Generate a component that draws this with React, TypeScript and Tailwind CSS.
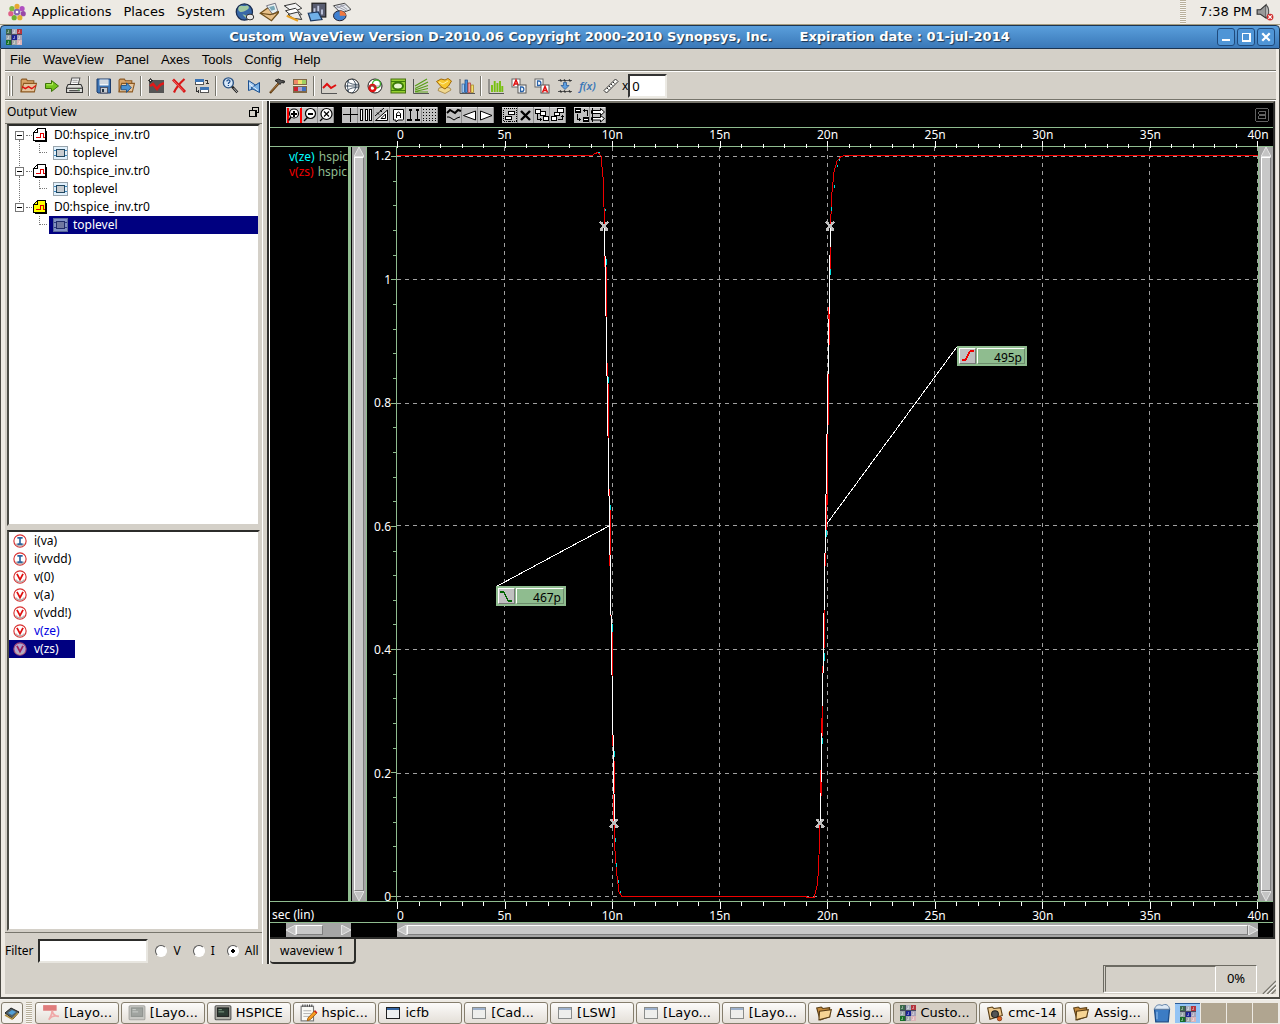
import React from "react";

type Kids = { children?: React.ReactNode };

/* ---------- icon helpers ---------- */

function Ico({ children, size = 16, crisp = false }: Kids & { size?: number; crisp?: boolean }) {
  return (
    <svg
      width={size}
      height={size}
      viewBox="0 0 16 16"
      fill="none"
      shapeRendering={crisp ? "crispEdges" : "auto"}
      className="shrink-0"
      aria-hidden="true"
    >
      {children}
    </svg>
  );
}

function AppIcon({ size = 16 }: { size?: number }) {
  const cells = ["#3c6a4c", "#a8aebc", "#b4343c", "#98a4a8", "#1c2494", "#a8a4b8", "#187028", "#a0a8a8", "#dcb4b8"];
  return (
    <Ico size={size} crisp>
      <rect width="16" height="16" fill="#484c60" />
      {cells.map((c, i) => (
        <g key={i} transform={`translate(${(i % 3) * 5 + (i % 3 > 0 ? 1 : 0)} ${Math.floor(i / 3) * 5 + (i > 2 ? 1 : 0)})`}>
          <rect width="5" height="5" fill={c} />
          <path d="M1 3.500h2M2.500 1v2" stroke="#ffffff" strokeOpacity=".4" />
        </g>
      ))}
    </Ico>
  );
}

const Folder = () => (
  <Ico size={18}>
    <path d="M1.500 3.500l4-.8 1.500 1.300 6-.8v8l-8.500 3z" fill="#c48a3c" stroke="#5c4018" />
    <path d="M4 6.500l10.500-1.500-1.500 6.500-9.500 2.500z" fill="#f6d494" stroke="#5c4018" />
  </Ico>
);

const WindowIcon = ({ dim = false }: { dim?: boolean }) => (
  <Ico crisp size={16}>
    <rect x="1.500" y="2.500" width="13" height="11" fill={dim ? "#eeeeec" : "#eef0f0"} stroke={dim ? "#8a8c8a" : "#202020"} />
    <rect x="2" y="3" width="12" height="2" fill={dim ? "#9cb0cc" : "#3465a4"} />
  </Ico>
);

const Terminal = ({ dim = false }: { dim?: boolean }) => (
  <Ico size={18}>
    <rect x="1" y="1.500" width="14" height="12.500" rx="1" fill={dim ? "#c8c8c4" : "#b0b0a8"} stroke={dim ? "#a8a8a4" : "#555"} />
    <rect x="3" y="3.500" width="10" height="7.500" fill={dim ? "#a0a4a0" : "#2c3c34"} stroke={dim ? "#909490" : "#222"} />
    <path d="M4 5h3M4 7h5" stroke={dim ? "#d0d4d0" : "#8aa890"} strokeWidth=".8" />
  </Ico>
);

const FolderOpen = ({ arrow = false }: { arrow?: boolean }) => (
  <Ico size={17}>
    <path d="M1 14V3l1-1h4l1 1.500h6V6" fill="#d8a468" stroke="#8c5820" />
    <path d="M1 14L3.500 6H15.500L13.500 14z" fill="#e4c49c" stroke="#8c5820" />
    {arrow ? (
      <path d="M3 8h5V5.500L12.500 10 8 14.500V12H3z" fill="#4a90d0" stroke="#1c4c80" strokeWidth=".8" />
    ) : (
      <path d="M2 9l3 2 3-2 3 2 4-3" stroke="#e01010" strokeWidth="1.300" />
    )}
  </Ico>
);

const toolbarGroups: { name: string; icon: React.ReactNode }[][] = [
  [
    { name: "Open waveform", icon: <FolderOpen /> },
    {
      name: "Reload",
      icon: (
        <Ico>
          <path d="M1.500 5.500h6V2.500l7 5.500-7 5.500v-3h-6z" fill="#74c41c" stroke="#3c7408" />
          <path d="M2.500 6.800h6V4.500" stroke="#b8f060" />
        </Ico>
      ),
    },
    {
      name: "Print",
      icon: (
        <Ico size={17}>
          <path d="M4 7l1.500-6H13l-1.500 6" fill="#fff" stroke="#555" />
          <path d="M6 3h5M6 5h5" stroke="#999" />
          <path d="M2 7h12l1.500 3v4.500h-15V10z" fill="#e0e0dc" stroke="#333" />
          <path d="M1 10.500h14M3 13h10" stroke="#222" />
          <rect x="11" y="11.500" width="2" height="1" fill="#6c6" />
        </Ico>
      ),
    },
  ],
  [
    {
      name: "Save",
      icon: (
        <Ico>
          <path d="M1 1h13.500v14H2L1 14z" fill="#3c74b4" stroke="#1c3c6c" />
          <rect x="3.500" y="1.500" width="9" height="6" fill="#f0f4f8" />
          <path d="M4 3h8M4 5h8" stroke="#b0b8c4" />
          <rect x="4.500" y="9.500" width="7" height="5.500" fill="#c8ccd0" stroke="#445" strokeWidth=".8" />
          <rect x="6" y="11" width="2" height="3" fill="#234" />
        </Ico>
      ),
    },
    { name: "Restore session", icon: <FolderOpen arrow /> },
  ],
  [
    {
      name: "New waveview",
      icon: (
        <Ico>
          <rect x="1" y="2" width="15" height="13" fill="#555" />
          <path d="M2 8l3-2 4 5 3-4 4-2" stroke="#e01818" strokeWidth="2.500" />
          <path d="M2.500 0v5M0 2.500h5M1 1l3 3M4 1L1 4" stroke="#222" strokeWidth=".8" />
          <rect x="2" y="2" width="1" height="1" fill="#fff" />
        </Ico>
      ),
    },
    {
      name: "Delete",
      icon: (
        <Ico>
          <path d="M2 1.500c3 3 8 8 12 12.500" stroke="#d81818" strokeWidth="2.800" />
          <path d="M13.500 1C9 5 5 10 3 14.500" stroke="#d81818" strokeWidth="2.200" />
          <path d="M2.500 2.500l10 10.500" stroke="#ff8080" strokeWidth=".7" />
        </Ico>
      ),
    },
    {
      name: "Swap",
      icon: (
        <Ico crisp>
          <rect x="1.500" y="1.500" width="8" height="5" fill="#fff" stroke="#555" />
          <rect x="1" y="1" width="9" height="3" fill="#3c74b4" />
          <rect x="6.500" y="10.500" width="8" height="4" fill="#fff" stroke="#555" />
          <rect x="6" y="9" width="9" height="3" fill="#3c74b4" />
          <path d="M11 2.500h2.500V6M12 5.500h3M2.500 9v4.500H5M4.500 12v3" stroke="#333" />
        </Ico>
      ),
    },
  ],
  [
    {
      name: "Find",
      icon: (
        <Ico size={17}>
          <circle cx="6" cy="5.500" r="4.700" fill="#d8e8f8" stroke="#2c5484" strokeWidth="1.300" />
          <path d="M4.500 4.200c.3-2 3.200-1.800 3 0C7.400 5.300 6 5.300 6 6.500M6 7.500v1" stroke="#1c4c8c" strokeWidth="1.200" />
          <path d="M9.500 9l5 5.500" stroke="#222" strokeWidth="2.400" />
          <path d="M11 10.500l3.500 4" stroke="#ddd" strokeWidth=".8" />
        </Ico>
      ),
    },
    {
      name: "Convert",
      icon: (
        <Ico>
          <path d="M2.500 2.500l10 6.500-10 3.500z" fill="#a8ccf0" stroke="#1c5090" />
          <path d="M13.500 4.500v10L5 10z" fill="#78b0e4" stroke="#1c5090" />
          <path d="M3 5.500l9 7" stroke="#fff" strokeWidth=".8" />
        </Ico>
      ),
    },
    {
      name: "Tools",
      icon: (
        <Ico>
          <path d="M1 15L10 5" stroke="#5c3810" strokeWidth="2.200" />
          <path d="M1.500 14L10 5" stroke="#c89050" strokeWidth=".8" />
          <path d="M6 2.500L9.500 1l3 1.500 3 .5-.5 2-2.500-.5-1.500 2-2-2z" fill="#555" stroke="#222" />
        </Ico>
      ),
    },
    {
      name: "Palette",
      icon: (
        <Ico crisp>
          <rect x="1" y="1" width="14" height="14" fill="#806848" />
          <rect x="2" y="2" width="4" height="4" fill="#f08868" />
          <rect x="6" y="2" width="4" height="4" fill="#f0e070" />
          <rect x="10" y="2" width="4" height="4" fill="#a0d060" />
          <rect x="2" y="9" width="4" height="4" fill="#d02030" />
          <rect x="6" y="9" width="4" height="4" fill="#a8a0d0" />
          <rect x="10" y="9" width="4" height="4" fill="#4070c0" />
          <rect x="1" y="7" width="14" height="1" fill="#f0e8d0" />
        </Ico>
      ),
    },
  ],
  [
    {
      name: "Waveform",
      icon: (
        <Ico>
          <path d="M.5 1v14.500H16" stroke="#555" />
          <path d="M2 10l4-4 4 4 5-3" stroke="#e01010" strokeWidth="2" />
        </Ico>
      ),
    },
    {
      name: "Smith chart",
      icon: (
        <Ico>
          <circle cx="8" cy="8" r="7" fill="#fff" stroke="#222" />
          <path d="M1 8h14M8 1c5 3 5 11 0 14M3 3c3 3 7 4 12 3M3 13c3-3 7-4 12-3M5 1.500c-2 4-2 9 0 13" stroke="#345" strokeWidth=".9" />
        </Ico>
      ),
    },
    {
      name: "Polar chart",
      icon: (
        <Ico>
          <circle cx="8" cy="8" r="7" fill="#fff" stroke="#222" />
          <circle cx="9.500" cy="6" r="4" stroke="#40b030" strokeWidth="1.400" />
          <circle cx="5.500" cy="10" r="3" stroke="#e01010" strokeWidth="2.400" />
          <path d="M1 8h14" stroke="#666" strokeWidth=".6" />
        </Ico>
      ),
    },
    {
      name: "Eye diagram",
      icon: (
        <Ico>
          <rect x="1" y="1" width="14.500" height="14" fill="#94d030" stroke="#487010" />
          <ellipse cx="8" cy="8" rx="5" ry="3.500" fill="#e8f4d0" stroke="#3c7c08" strokeWidth="2" />
          <path d="M1 3.500h14M1 12.500h14" stroke="#3c7c08" />
        </Ico>
      ),
    },
    {
      name: "Sweep",
      icon: (
        <Ico>
          <path d="M.5 1v14.500H16" stroke="#555" />
          <path d="M2 8L14 1M2 10.500L15 4M2 12L15 7.500M2 13.500L15 10.500M2 14h13" stroke="#58a018" strokeWidth="1.200" />
        </Ico>
      ),
    },
    {
      name: "Surface",
      icon: (
        <Ico>
          <path d="M3 10l5-1 6 1 1 2-6 3.500L2 12.500z" fill="#f0d890" stroke="#a08040" strokeWidth=".8" />
          <path d="M.5 3.500L5 1l4 1 3-1.500 3.500 2.500-3 5L9 11 5.500 9z" fill="#f8c830" stroke="#a06808" />
          <path d="M3 4l4 2 5-3" stroke="#fff0a0" />
        </Ico>
      ),
    },
    {
      name: "Bar chart",
      icon: (
        <Ico>
          <path d="M1 1v14.500H16" stroke="#555" />
          <rect x="3" y="6" width="2.500" height="8.500" fill="#a0c8f0" stroke="#2c5c98" strokeWidth=".7" />
          <rect x="6" y="2" width="2.500" height="12.500" fill="#4890e0" stroke="#1c4880" strokeWidth=".7" />
          <rect x="9" y="5" width="2.500" height="9.500" fill="#f0a0a0" stroke="#b03030" strokeWidth=".7" />
          <rect x="12" y="7" width="2.500" height="7.500" fill="#f4e070" stroke="#a08020" strokeWidth=".7" />
        </Ico>
      ),
    },
  ],
  [
    {
      name: "Histogram",
      icon: (
        <Ico>
          <path d="M1 1v14.500H16" stroke="#555" />
          <path d="M4 14V7M6.700 14V3M9.400 14V5M12 14V3M14.300 14V8" stroke="#78c010" strokeWidth="1.900" />
        </Ico>
      ),
    },
    {
      name: "Analog to digital",
      icon: (
        <Ico>
          <rect x="1" y="1" width="8" height="8" fill="#fff" stroke="#666" />
          <path d="M2.500 8L5 2l2.500 6M3.500 6h3" stroke="#e01010" strokeWidth="1.500" />
          <rect x="7" y="7" width="8" height="8" fill="#fff" stroke="#555" />
          <path d="M9.500 9v4.500h1.500c2.500 0 2.500-4.500 0-4.500z" stroke="#2c64a8" strokeWidth="1.300" />
        </Ico>
      ),
    },
    {
      name: "Digital to analog",
      icon: (
        <Ico>
          <rect x="1" y="1" width="8" height="8" fill="#fff" stroke="#666" />
          <path d="M3.500 3v4.500H5c2.500 0 2.500-4.500 0-4.500z" stroke="#2c64a8" strokeWidth="1.300" />
          <rect x="7" y="7" width="8" height="8" fill="#fff" stroke="#555" />
          <path d="M8.500 14.500L11 8.500l2.500 6M9.500 12.500h3" stroke="#e01010" strokeWidth="1.500" />
        </Ico>
      ),
    },
    {
      name: "Collapse",
      icon: (
        <Ico>
          <path d="M1 2.500h14M1 13.500h14" stroke="#555" />
          <path d="M3 1.500l1.500 2M7 1.500l1.500 2M12 1.500l1.500 2M3 12.500l1.500 2M7 12.500l1.500 2M12 12.500l1.500 2" stroke="#333" strokeWidth="1.400" />
          <path d="M6.500 4.500h3v3H12L8 11.500 4 7.500h2.500z" fill="#60a0e0" stroke="#2c5c98" strokeWidth=".8" />
        </Ico>
      ),
    },
    {
      name: "Function",
      icon: <span className="font-['Noto_Sans',sans-serif] text-[11px] leading-4 font-semibold text-[#3c78b8] italic">f(x)</span>,
    },
    {
      name: "Ruler",
      icon: (
        <Ico>
          <path d="M1 12.500L12.500 1 15 3.500 3.500 15z" fill="#f8f8f4" stroke="#333" />
          <path d="M4 10l1.500 1.500M6 8l1.500 1.500M8 6l1.500 1.500M10 4l1.500 1.500" stroke="#222" />
        </Ico>
      ),
    },
  ],
];

/* ---------- black-and-grey waveview toolbar ---------- */

const viewGroups: { name: string; icon: React.ReactNode }[][] = [
  [
    {
      name: "Zoom in",
      icon: (
        <>
          <path d="M1.500 1v15M14.500 1v15" stroke="#f00" strokeWidth="2" shapeRendering="crispEdges" />
          <circle cx="8" cy="6.500" r="4.500" fill="#fff" stroke="#000" strokeWidth="1.200" />
          <path d="M5 6.500h6M8 3.500v6" stroke="#000" strokeWidth="2" shapeRendering="crispEdges" />
          <path d="M5 10L2.500 13.500" stroke="#000" strokeWidth="1.500" />
        </>
      ),
    },
    {
      name: "Zoom out",
      icon: (
        <>
          <circle cx="8.500" cy="6.500" r="5" fill="#fff" stroke="#000" strokeWidth="1.200" />
          <path d="M6 7h5" stroke="#000" strokeWidth="2" shapeRendering="crispEdges" />
          <path d="M5.500 10.500L2 14" stroke="#000" strokeWidth="1.500" />
        </>
      ),
    },
    {
      name: "Zoom fit",
      icon: (
        <>
          <circle cx="8.500" cy="7" r="5.500" fill="#fff" stroke="#000" strokeWidth="1.200" />
          <path d="M6 4.500l5 5M11 4.500l-5 5M4.500 11.500L2 14" stroke="#000" strokeWidth="1.200" />
        </>
      ),
    },
  ],
  [
    { name: "Cursor", icon: <path d="M8.500 1v14M1 7.500h15" stroke="#000" shapeRendering="crispEdges" /> },
    {
      name: "Grid columns",
      icon: (
        <g stroke="#000" fill="#fff" shapeRendering="crispEdges">
          <path d="M2.500 2.500h2v11h-2zM7.500 2.500h2v11h-2zM11.500 2.500h2v11h-2z" />
        </g>
      ),
    },
    {
      name: "Measure",
      icon: (
        <>
          <path d="M1.500 13.500h12V3z" fill="#fff" stroke="#000" />
          <path d="M7 11.500h4.500V7zM1 9l9-8M3 5.500l2 2M6 3l2 2" stroke="#000" />
        </>
      ),
    },
    {
      name: "Annotate",
      icon: (
        <>
          <path d="M3.500 2.500h10v10l-1 .5H8l-2 2v-2H3.500z" fill="#fff" stroke="#000" />
          <path d="M6.500 11V6.500L8.500 5l2 1.500V11M6.500 8.500h4" stroke="#000" />
        </>
      ),
    },
    {
      name: "Markers",
      icon: (
        <g shapeRendering="crispEdges">
          <path d="M4 2v12M11 2v12" stroke="#000" />
          <path d="M3 3h3M10 3h3M1 13h5M9 13h5" stroke="#000" strokeWidth="2" />
        </g>
      ),
    },
    {
      name: "Grid",
      icon: (
        <path
          d="M1 2.500h14M1 5.500h14M1 8.500h14M1 11.500h14M1 13.500h14"
          stroke="#000"
          strokeDasharray="1 2"
          shapeRendering="crispEdges"
        />
      ),
    },
  ],
  [
    {
      name: "Signals",
      icon: (
        <>
          <path d="M1 6l3-3 5 3 3-3 3 1" stroke="#000" strokeWidth="2" />
          <path d="M1 10h2l2 1 3 2 3-2 3-1" stroke="#000" />
        </>
      ),
    },
    { name: "Previous", icon: <path d="M1.500 8.500L13.500 4v9z" fill="#fff" stroke="#000" /> },
    { name: "Next", icon: <path d="M14 8.500L2.500 4v9z" fill="#fff" stroke="#000" /> },
  ],
  [
    {
      name: "Select group",
      icon: (
        <g shapeRendering="crispEdges">
          <rect x="1.500" y="1.500" width="13" height="13" stroke="#000" strokeDasharray="1 1" />
          <path d="M6.500 4.500h6v3h-6zM3.500 9.500h6v3h-6z" fill="#fff" stroke="#000" />
        </g>
      ),
    },
    { name: "Delete panel", icon: <path d="M3 4l9 9M12 4l-9 9" stroke="#000" strokeWidth="2.400" /> },
    {
      name: "Send back",
      icon: (
        <g shapeRendering="crispEdges">
          <path d="M1.500 2.500h5v4h-5zM6.500 4.500h5v4h-5zM9.500 9.500h5v4h-5z" fill="#fff" stroke="#000" />
          <path d="M3.500 7v5.500H8M6.500 11v3" stroke="#000" />
        </g>
      ),
    },
    {
      name: "Bring front",
      icon: (
        <g shapeRendering="crispEdges">
          <path d="M7.500 1.500h6v4h-6zM4.500 5.500h5v3h-5zM1.500 9.500h5v4h-5z" fill="#fff" stroke="#000" />
          <path d="M8 12.500h4.500V8M11 9.500h3" stroke="#000" />
        </g>
      ),
    },
  ],
  [
    {
      name: "Exchange panels",
      icon: (
        <g shapeRendering="crispEdges">
          <path d="M1.500 1.500h5v4h-5zM9.500 10.500h5v4h-5z" fill="#000" stroke="#000" />
          <path d="M2 3.500h4M10 12.500h4" stroke="#fff" />
          <path d="M9 3.500h4.500V9M10.500 2v3M3.500 7v5.500H7M5.500 11v3" stroke="#000" />
        </g>
      ),
    },
    {
      name: "Link panels",
      icon: (
        <>
          <path d="M1.500 3.500h9V1.500L14.500 5l-4 3.500v-2h-9zM1.500 10.500h9v-2l4 3-4 3.500v-2h-9z" fill="#fff" stroke="#000" />
          <path d="M2.500 1v14" stroke="#000" />
        </>
      ),
    },
  ],
];

/* ---------- data ---------- */

const files = [{ active: false }, { active: false }, { active: true }];

const signals = [
  { name: "i(va)", kind: "I" },
  { name: "i(vvdd)", kind: "I" },
  { name: "v(0)", kind: "V" },
  { name: "v(a)", kind: "V" },
  { name: "v(vdd!)", kind: "V" },
  { name: "v(ze)", kind: "V", plotted: true },
  { name: "v(zs)", kind: "V", selected: true },
];

const timeLabels = ["0", "5n", "10n", "15n", "20n", "25n", "30n", "35n", "40n"];
const voltLabels = ["1.2", "1", "0.8", "0.6", "0.4", "0.2", "0"];

const PLOT_W = 861;
const PLOT_H = 755;
const timeX = (n: number) => n * 21.5;
const voltY = (i: number) => 9 + i * 123.600;

const pct = (v: number, total: number) => `${(v / total) * 100}%`;

const tasks: { label: string; icon: React.ReactNode; active?: boolean }[] = [
  {
    label: "[Layo...",
    icon: (
      <Ico size={18}>
        <rect x="1" y="1" width="12" height="5" fill="#e07c7c" />
        <path d="M6 14c2-3 3-5 3-8 1 4 3 5 6 5-4-1-7 0-9 3z" stroke="#f0a8a8" strokeWidth="1.500" />
      </Ico>
    ),
  },
  { label: "[Layo...", icon: <Terminal dim /> },
  { label: "HSPICE", icon: <Terminal /> },
  {
    label: "hspic...",
    icon: (
      <Ico size={18}>
        <rect x="1" y="2" width="11" height="13" fill="#fafaf6" stroke="#777" />
        <path d="M2 1.500h10" stroke="#444" strokeWidth="2" strokeDasharray="1 1" />
        <path d="M3 6h7M3 8.500h7M3 11h5" stroke="#aaa" strokeWidth=".8" />
        <path d="M7 12.500L13 6l2 2-6 6-2.500.8z" fill="#f89c20" stroke="#8c4c00" strokeWidth=".7" />
        <path d="M13 6l2 2" stroke="#d02020" strokeWidth="1.500" />
      </Ico>
    ),
  },
  { label: "icfb", icon: <WindowIcon /> },
  { label: "[Cad...", icon: <WindowIcon dim /> },
  { label: "[LSW]", icon: <WindowIcon dim /> },
  { label: "[Layo...", icon: <WindowIcon dim /> },
  { label: "[Layo...", icon: <WindowIcon dim /> },
  { label: "Assig...", icon: <Folder /> },
  { label: "Custo...", icon: <AppIcon />, active: true },
  {
    label: "cmc-14",
    icon: (
      <Ico size={18}>
        <path d="M1.500 3.500l4-.8 1.500 1.300 6-.8 1.500 7-11 3.300z" fill="#ecc88c" stroke="#5c4018" />
        <circle cx="8" cy="9" r="3" fill="#555" stroke="#222" />
        <circle cx="12" cy="13" r="2" fill="#e06020" stroke="#702808" strokeWidth=".6" />
      </Ico>
    ),
  },
  { label: "Assig...", icon: <Folder /> },
];

/* ---------- desktop panel ---------- */

function TopPanel() {
  return (
    <header className="flex h-[25px] shrink-0 items-center border-b border-[#a59d80] bg-[#edeae4] pr-1.5 pl-2 font-['DejaVu_Sans',sans-serif] text-[13px] text-black">
      <Ico size={18}>
        <circle cx="8" cy="3" r="2.300" fill="#e8a830" />
        <circle cx="12.500" cy="5" r="2.300" fill="#b050c0" />
        <circle cx="13.500" cy="9.500" r="2.300" fill="#9848a8" />
        <circle cx="10.500" cy="13" r="2.300" fill="#e0b030" />
        <circle cx="5.500" cy="13" r="2.300" fill="#70b030" />
        <circle cx="2.500" cy="9.500" r="2.300" fill="#e06088" />
        <circle cx="3.500" cy="5" r="2.300" fill="#80b840" />
        <circle cx="8" cy="8" r="3" fill="#8868b0" />
        <circle cx="8" cy="8" r="1.200" fill="#fff" />
      </Ico>
      <nav className="ml-1.5 flex gap-3">
        <button>Applications</button>
        <button>Places</button>
        <button>System</button>
      </nav>
      <div className="ml-2.5 flex gap-1">
        <button aria-label="Web browser">
          <Ico size={20}>
            <circle cx="7.500" cy="8" r="6.500" fill="#3868a8" stroke="#182c50" />
            <path d="M3 4c2-2 4 0 6-1s3 2 1 3-3 2-5 2-3-2-2-4zM6 10c2 0 4 1 3 3" fill="#a0c8a0" />
            <ellipse cx="12" cy="12" rx="3" ry="2.300" fill="#e8e8e8" stroke="#333" strokeWidth=".8" />
          </Ico>
        </button>
        <button aria-label="Email">
          <Ico size={20}>
            <path d="M1 9l7-5 8 4-6 7z" fill="#e8c088" stroke="#70501c" />
            <path d="M6 3l7-2 2 6-4 3z" fill="#e8f0f0" stroke="#667" strokeWidth=".7" />
            <path d="M8 4l4-1 1 3-3 1z" fill="#78a8b8" />
            <path d="M1 9l8 1 7-2" stroke="#70501c" />
          </Ico>
        </button>
        <button aria-label="Word processor">
          <Ico size={20}>
            <path d="M1 3l9-2 5 4-7 3z" fill="#f4f4f4" stroke="#333" strokeWidth=".8" />
            <path d="M2 7l8-2 5 5-7 2z" fill="#fff" stroke="#333" strokeWidth=".8" />
            <path d="M4 10l8-2 3 6-7-1z" fill="#e8e8e8" stroke="#333" strokeWidth=".8" />
            <path d="M3 11l9 4" stroke="#e8a020" strokeWidth="1.600" />
          </Ico>
        </button>
        <button aria-label="Presentation">
          <Ico size={20}>
            <rect x="4" y="1" width="11" height="11" fill="#585c70" stroke="#222" />
            <path d="M6 10V5M9 10V3M12 10V6" stroke="#c0c8e0" strokeWidth="1.500" />
            <path d="M1 9l8-1 3 6-9 1z" fill="#70b0e8" stroke="#1c3860" />
          </Ico>
        </button>
        <button aria-label="Spreadsheet">
          <Ico size={20}>
            <path d="M2 3l9-2 5 5-8 3z" fill="#e4e8ec" stroke="#444" strokeWidth=".8" />
            <path d="M4 3l8 4M7 2l6 4M4 5l8-3" stroke="#889" strokeWidth=".6" />
            <ellipse cx="7" cy="11" rx="5" ry="4" fill="#4080d0" stroke="#223" strokeWidth=".8" />
            <path d="M7 11V7c3 0 5 2 5 4z" fill="#f07840" />
          </Ico>
        </button>
      </div>
      <div className="mr-3.5 ml-auto h-6 w-1.5 bg-[repeating-linear-gradient(#b8b09c_0_1px,#f8f6f2_1px_2px)]" />
      <time className="mr-1">7:38 PM</time>
      <Ico size={18}>
        <path d="M1 6h3l5-4.500v12L4 10H1z" fill="#999" stroke="#333" />
        <path d="M9 2c3 2 3 9 0 11" fill="#bbb" stroke="#555" />
        <circle cx="12.500" cy="12.500" r="3" fill="#d03030" />
        <path d="M11 11l3 3M14 11l-3 3" stroke="#fff" />
      </Ico>
    </header>
  );
}

function TitleBar() {
  const btn =
    "flex size-[18px] items-center justify-center rounded-[3px] border border-[#1f4a7c] bg-[#4f95d6] text-white";
  return (
    <div className="flex h-6 shrink-0 items-center rounded-t border border-[#1c3450] bg-linear-to-b from-[#5a9fdc] to-[#3a78b8] pr-1 pl-[5px]">
      <AppIcon />
      <h1 className="flex-1 text-center font-['DejaVu_Sans',sans-serif] text-[13px] leading-5 font-bold whitespace-pre text-white [text-shadow:1px_1px_1px_#1c3450]">
        {"Custom WaveView Version D-2010.06 Copyright 2000-2010 Synopsys, Inc.      Expiration date : 01-jul-2014"}
      </h1>
      <div className="flex gap-0.5">
        <button className={btn} aria-label="Minimize">
          <Ico size={12} crisp>
            <rect x="2" y="10" width="11" height="3" fill="#fff" />
          </Ico>
        </button>
        <button className={btn} aria-label="Maximize">
          <Ico size={12} crisp>
            <path d="M3 3h10v10H3z" stroke="#fff" strokeWidth="2" />
          </Ico>
        </button>
        <button className={btn} aria-label="Close">
          <Ico size={12}>
            <path d="M3 3l10 10M13 3L3 13" stroke="#fff" strokeWidth="3" />
          </Ico>
        </button>
      </div>
    </div>
  );
}

function Toolbar() {
  return (
    <div className="flex h-[27px] shrink-0 items-center pl-[3px]">
      <div className="mr-1 flex gap-px">
        <span className="h-5 w-0.5 border-r border-l border-r-[#77756c] border-l-white" />
        <span className="h-5 w-0.5 border-r border-l border-r-[#77756c] border-l-white" />
      </div>
      {toolbarGroups.map((g, i) => (
        <React.Fragment key={i}>
          {i > 0 && <span className="mx-0.5 h-5 w-0.5 border-r border-l border-r-white border-l-[#77756c]" />}
          {g.map((t) => (
            <button key={t.name} aria-label={t.name} className="flex h-6 w-[23px] items-center justify-center">
              {t.icon}
            </button>
          ))}
        </React.Fragment>
      ))}
      <label htmlFor="xval" className="text-[12px] leading-4">
        x
      </label>
      <input
        id="xval"
        defaultValue="0"
        className="h-6 w-[39px] border-2 border-t-[#333] border-r-[#eceae4] border-b-[#eceae4] border-l-[#333] bg-white px-0.5 text-[13px]"
      />
    </div>
  );
}

/* ---------- left dock ---------- */

const sunken = "border-2 border-t-[#2c2c2a] border-l-[#4c4c46] border-b-[#d4d0c8] border-r-[#d4d0c8] bg-white";

function FileIcon({ active }: { active: boolean }) {
  return (
    <Ico crisp>
      <path d="M1.500 13.500V5.500l4-4h8v12z" fill={active ? "#ffff00" : "#fff"} stroke="#000" />
      <path d="M1.500 5.500h4v-4M14.500 4v10.500H3" stroke="#000" />
      <path d="M4 10.500h4v-4h3v4h2" stroke="#e00000" />
    </Ico>
  );
}

function BlockIcon({ selected = false }: { selected?: boolean }) {
  return (
    <Ico crisp>
      <rect x="1.500" y="1.500" width="14" height="13" fill={selected ? "#8090c4" : "#e0f0fc"} stroke={selected ? "#586898" : "#98a4ac"} />
      <path d="M2 5.500h13M2 10.500h13" stroke={selected ? "#303c80" : "#3c88c0"} />
      <rect x="4.500" y="4.500" width="8" height="7" fill={selected ? "#7078a0" : "#c8ccd0"} stroke={selected ? "#202c68" : "#234860"} />
    </Ico>
  );
}

function SignalIcon({ kind, selected }: { kind: string; selected?: boolean }) {
  return (
    <Ico size={14}>
      <circle cx="8" cy="8" r="7" fill={selected ? "#b0a8d0" : "#fff"} stroke={selected ? "#a04878" : "#d83030"} strokeWidth="1.300" />
      <path d="M3 11a6 6 0 0 0 10 0" stroke="#b8b0b0" strokeWidth="1.500" />
      {kind === "V" ? (
        <path d="M4.500 4.500L8 11l3.500-6.500" stroke={selected ? "#a02058" : "#e01010"} strokeWidth="2" />
      ) : (
        <path d="M5 4.500h6M8 4.500v7M5 11.500h6" stroke="#2c64a0" strokeWidth="1.900" />
      )}
    </Ico>
  );
}

function OutputView() {
  return (
    <aside className="flex w-[258px] shrink-0 flex-col border-r border-white">
      <div className="flex h-[22px] shrink-0 items-center justify-between pr-[3px] pl-0.5 text-[12px]">
        <h2>Output View</h2>
        <button aria-label="Float panel">
          <Ico size={10} crisp>
            <path d="M5 1h10v8H5z" stroke="#000" strokeWidth="2" />
            <path d="M1 6h10v9H1z" fill="#d4d0c8" stroke="#000" strokeWidth="2" />
          </Ico>
        </button>
      </div>
      <div className="flex min-h-0 flex-1 flex-col border-t border-b border-t-[#77756c] border-b-[#77756c] px-0.5 pb-px">
        <ul role="tree" className={`min-h-0 flex-1 overflow-hidden text-[12px] leading-[18px] ${sunken}`}>
          {files.map((f, i) => (
            <li key={i} role="treeitem" aria-expanded="true" className="relative">
              {i < files.length - 1 && (
                <span className="absolute top-3.5 left-2.5 h-[30px] border-l border-dotted border-[#777]" />
              )}
              <div className="flex h-[18px] items-center pl-1.5">
                <button
                  aria-label="Collapse"
                  className="flex size-[9px] shrink-0 items-center justify-center border border-[#777] bg-white"
                >
                  <span className="h-px w-[5px] bg-black" />
                </button>
                <span className="ml-0.5 w-1.5 border-t border-dotted border-[#777]" />
                <FileIcon active={f.active} />
                <span className="ml-1.5">D0:hspice_inv.tr0</span>
              </div>
              <div className="flex h-[18px]">
                <span className="mr-0.5 ml-[30px] h-[9px] w-2 shrink-0 border-b border-l border-dotted border-[#777]" />
                <span
                  className={
                    f.active
                      ? "flex h-[18px] flex-1 items-center gap-1 bg-[#000080] pl-[3px] text-white"
                      : "flex h-[18px] flex-1 items-center gap-1 pl-[3px]"
                  }
                >
                  <BlockIcon selected={f.active} />
                  <span className="pl-px">toplevel</span>
                </span>
              </div>
            </li>
          ))}
        </ul>
        <div className="h-1 shrink-0" />
        <ul className={`min-h-0 flex-1 overflow-hidden text-[12px] leading-[18px] ${sunken}`}>
          {signals.map((s) => (
            <li key={s.name} className="flex h-[18px]">
              <span
                className={
                  s.selected
                    ? "flex items-center gap-[7px] bg-[#000080] pr-4 pl-1 text-white"
                    : s.plotted
                      ? "flex items-center gap-[7px] pl-1 text-[#0000e0]"
                      : "flex items-center gap-[7px] pl-1"
                }
              >
                <SignalIcon kind={s.kind} selected={s.selected} />
                {s.name}
              </span>
            </li>
          ))}
        </ul>
      </div>
      <form className="flex h-[31px] shrink-0 items-center pt-1 text-[12px]" onSubmit={(e) => e.preventDefault()}>
        <label htmlFor="filter">Filter</label>
        <input
          id="filter"
          className="mr-[7px] ml-[5px] h-6 w-[110px] border-2 border-t-[#2c2c2a] border-r-[#e8e6e0] border-b-[#e8e6e0] border-l-[#2c2c2a] bg-white px-0.5"
        />
        {["V", "I", "All"].map((o) => (
          <label key={o} className="mr-3 flex items-center gap-1.5">
            <input
              type="radio"
              name="kind"
              defaultChecked={o === "All"}
              className="size-3 appearance-none rounded-full border border-t-[#555] border-r-white border-b-white border-l-[#555] bg-white checked:bg-[radial-gradient(circle,#000_2px,#fff_2px)]"
            />
            {o}
          </label>
        ))}
      </form>
    </aside>
  );
}

/* ---------- waveview ---------- */

function TimeRuler({ bottom = false }: { bottom?: boolean }) {
  const minor = Array.from({ length: 41 }, (_, i) => i);
  return (
    <div className={bottom ? "flex h-5 flex-1 flex-col-reverse" : "flex h-[18px] flex-1 flex-col"}>
      <div className="flex h-[13px] justify-between text-[12px] leading-[14px] text-white">
        {timeLabels.map((t) => (
          <span key={t} className={t === "0" ? "flex w-0 justify-start" : "flex w-0 justify-center"}>
            {t}
          </span>
        ))}
      </div>
      <div className={bottom ? "flex flex-1 items-start justify-between" : "flex flex-1 items-end justify-between"}>
        {minor.map((m) => (
          <span key={m} className={m % 5 === 0 ? "h-[7px] w-px bg-white" : "h-1 w-px bg-white"} />
        ))}
      </div>
    </div>
  );
}

function Arrow({ d }: { d: string }) {
  return (
    <svg viewBox="0 0 10 10" className="size-2.5 shrink-0" aria-hidden="true">
      <path d={d} fill="#c4c4c4" stroke="#f0f0f0" strokeWidth=".8" />
    </svg>
  );
}

function VScroll() {
  return (
    <div className="flex w-3.5 shrink-0 flex-col items-center bg-[#a6a6a6]">
      <Arrow d="M5 0L10 9.500H0z" />
      <div className="w-2.5 flex-1 border border-t-white border-r-[#808080] border-b-[#808080] border-l-white bg-[#c8c8c8]" />
      <Arrow d="M5 10L0 .5h10z" />
    </div>
  );
}

function HScroll({ thumb }: { thumb: string }) {
  return (
    <div className="flex h-3.5 w-full items-center bg-[#a6a6a6]">
      <Arrow d="M0 5L9.500 0v10z" />
      <div
        className={`h-2.5 border border-t-white border-r-[#808080] border-b-[#808080] border-l-white bg-[#c8c8c8] ${thumb}`}
      />
      <span className="ml-auto flex">
        <Arrow d="M10 5L.5 0v10z" />
      </span>
    </div>
  );
}

function Callout({ left, top, value, rising }: { left: number; top: number; value: string; rising?: boolean }) {
  return (
    <div
      className="absolute flex h-5 w-[70px] gap-px bg-[#8fbc8f] p-0.5 text-[12px] leading-[18px] text-black"
      style={{ left: pct(left, PLOT_W), top: pct(top, PLOT_H) }}
    >
      <span className="flex w-[17px] items-center justify-center border border-t-white border-r-[#777] border-b-[#777] border-l-white bg-[#c0c0c0]">
        <Ico size={15} crisp>
          {rising ? (
            <path d="M2 13h4l5-10h4" stroke="#f00000" strokeWidth="1.800" />
          ) : (
            <path d="M1 3h4l5 10h4" stroke="#006400" strokeWidth="1.800" />
          )}
        </Ico>
      </span>
      <span className="flex-1 border border-t-white border-r-[#6c8c6c] border-b-[#6c8c6c] border-l-white pr-0.5 text-right">
        {value}
      </span>
    </div>
  );
}

function Plot() {
  const markers = [
    [207, 79],
    [433, 79],
    [217, 677],
    [423, 677],
  ];
  return (
    <div className="relative min-w-0 flex-1">
      <svg className="absolute inset-0 size-full" shapeRendering="crispEdges" role="img" aria-label="Inverter output waveforms">
        <svg width="100%" height="100%" viewBox={`0 0 ${PLOT_W} ${PLOT_H}`} preserveAspectRatio="none" fill="none">
          <g stroke="#a0a0a0" strokeDasharray="4 4">
            {[5, 10, 15, 20, 25, 30, 35].map((n) => (
              <path key={n} d={`M${Math.floor(timeX(n)) + 0.5} 0V${PLOT_H}`} vectorEffect="non-scaling-stroke" />
            ))}
            <path d={`M${PLOT_W - 0.5} 0V${PLOT_H}`} vectorEffect="non-scaling-stroke" />
            {voltLabels.map((v, i) => (
              <path key={v} d={`M0 ${Math.floor(voltY(i)) + 0.5}H${PLOT_W}`} vectorEffect="non-scaling-stroke" />
            ))}
          </g>
          <path
            d="M0 8.500H195L198 6.500 201 5.500 204 9 206 30 207 60 208 120 210 215 212 340 213 420 215 520 217 677 218 705 220 730 222 746 225 750.500H408L411 751.500H417L420 740 421.500 725 423 677 426 520 428 420 430 360 432 200 433.500 79 435 45 437 25 440 14 444 9.500 448 8.500H861"
            stroke="#f00000"
            vectorEffect="non-scaling-stroke"
          />
          <path
            d="M200.500 5.500h2M208.500 62v2M218.500 692v4M219.500 717v4M221.500 734v3M223.500 745v2M434.500 60v4M437.500 38v3M440.500 18v2M442.500 12v2"
            stroke="#00e0e0"
            vectorEffect="non-scaling-stroke"
          />
          <path d="M207.500 79L217.500 677M433.500 79L423.500 677M99.500 440L213 379M430 377L560 200" stroke="#fff" vectorEffect="non-scaling-stroke" />
          <path
            d="M209.500 120v50M211.500 237v54M213.500 363v46M215.500 486v44M217.500 615v32M433.500 100v22M431.500 160v12M429.500 348v35M427.500 464v38M425.500 560v30M424.500 636v14"
            stroke="#f00000"
            vectorEffect="non-scaling-stroke"
          />
          <path
            d="M209.500 112v6M211.500 230v6M213.500 358v5M215.500 478v8M217.500 605v6M433.500 122v6M429.500 384v7M427.500 507v8M425.500 592v6"
            stroke="#00e0e0"
            vectorEffect="non-scaling-stroke"
          />
        </svg>
        {markers.map(([x, y]) => (
          <svg key={`${x}-${y}`} x={pct(x, PLOT_W)} y={pct(y, PLOT_H)} overflow="visible">
            <path d="M-4 -4L4 4M4 -4L-4 4M-4 -3h3M1 -3h3M-4 4h3M1 4h3" stroke="#c0c0c0" strokeWidth="2" />
          </svg>
        ))}
      </svg>
      <Callout left={99} top={440} value="467p" />
      <Callout left={560} top={199} value="495p" rising />
    </div>
  );
}

function VoltAxis() {
  const minor = Array.from({ length: 31 }, (_, i) => i);
  return (
    <div className="flex w-[30px] shrink-0 border-r border-[#8fbc8f] pt-[9px] pb-1 text-[12px] leading-[14px] text-white">
      <div className="flex flex-1 flex-col justify-between text-right">
        {voltLabels.map((v) => (
          <span key={v} className="flex h-0 items-center justify-end">
            {v}
          </span>
        ))}
      </div>
      <div className="flex w-[5px] flex-col items-end justify-between">
        {minor.map((m) => (
          <span key={m} className={m % 5 === 0 ? "h-px w-[5px] bg-[#8fbc8f]" : "h-px w-[3px] bg-[#8fbc8f]"} />
        ))}
      </div>
    </div>
  );
}

function WaveView() {
  const line = "border-[#8fbc8f]";
  return (
    <main className="mr-px flex min-w-0 flex-1 flex-col border-l border-l-white">
      <div className="flex min-h-0 flex-1 flex-col border-t-2 border-r-2 border-b-2 border-[#2c2c2a] border-t-[#77756c] bg-black">
        <div className={`flex h-[25px] shrink-0 items-center gap-2 border-b pr-1 pl-4 ${line}`}>
          {viewGroups.map((g, i) => (
            <div key={i} className="flex">
              {g.map((t) => (
                <button
                  key={t.name}
                  aria-label={t.name}
                  className="size-4 bg-[#c0c0c0] shadow-[inset_-1px_0_0_#909090,inset_0_1px_0_#e4e4e4]"
                >
                  <Ico>{t.icon}</Ico>
                </button>
              ))}
            </div>
          ))}
          <button aria-label="Panel layout" className="ml-auto">
            <Ico size={14} crisp>
              <path d="M1 1h14v14H1zM4 4h8v3H4zM4 9h8v3H4z" stroke="#707070" />
            </Ico>
          </button>
        </div>
        <div className={`flex shrink-0 border-b pl-[127px] ${line}`}>
          <TimeRuler />
          <span className="w-[15px]" />
        </div>
        <div className="flex min-h-0 flex-1">
          <div className="w-[78px] shrink-0 overflow-hidden pt-0.5 pl-[19px] text-[12px] leading-[15px] whitespace-nowrap text-[#8fbc8f]">
            <div className="flex gap-1">
              <span className="text-[#00ffff]">v(ze)</span> hspic
            </div>
            <div className="flex gap-1">
              <span className="text-[#f00000]">v(zs)</span> hspic
            </div>
          </div>
          <div className="mr-px w-[3px] shrink-0 bg-[#8fbc8f]" />
          <VScroll />
          <div className="w-px shrink-0 bg-[#8fbc8f]" />
          <VoltAxis />
          <Plot />
          <div className="w-px shrink-0 bg-[#8fbc8f]" />
          <VScroll />
        </div>
        <div className={`flex shrink-0 border-t border-b ${line}`}>
          <div className="w-[127px] shrink-0 pt-1.5 pl-0.5 text-[12px] leading-[14px] text-white">sec (lin)</div>
          <TimeRuler bottom />
          <span className="w-[15px]" />
        </div>
        <div className="flex shrink-0">
          <div className="w-[127px] shrink-0 pr-[46px] pl-4">
            <HScroll thumb="w-[27px]" />
          </div>
          <HScroll thumb="flex-1" />
          <span className="w-[15px] shrink-0" />
        </div>
      </div>
      <div role="tablist" className="flex h-[25px] shrink-0">
        <button
          role="tab"
          aria-selected="true"
          className="rounded-b-sm border-r-2 border-b-2 border-[#2c2c2a] bg-[#d4d0c8] px-2.5 text-[12px]"
        >
          waveview 1
        </button>
      </div>
    </main>
  );
}

/* ---------- bottom ---------- */

function StatusBar() {
  return (
    <div className="flex h-[30px] shrink-0 items-center justify-end text-[13px]">
      <div className="flex h-7 w-[154px] border border-t-[#6c6a62] border-r-white border-b-white border-l-[#6c6a62] pl-px">
        <div
          role="progressbar"
          aria-label="Progress"
          aria-valuenow={0}
          className="flex-1 border border-t-[#6c6a62] border-r-white border-b-transparent border-l-[#6c6a62]"
        />
        <span className="flex w-10 items-center justify-center">0%</span>
      </div>
      <span className="ml-[5px] self-end">
        <Ico size={14}>
          <path d="M1 16L16 1M6 16L16 6M11 16l5-5" stroke="#77756c" strokeWidth="1.500" />
          <path d="M3 16L16 3M8 16l8-8" stroke="#fff" />
        </Ico>
      </span>
    </div>
  );
}

function TaskBar() {
  const base =
    "flex h-[22px] min-w-0 flex-1 items-center gap-1 overflow-hidden rounded-[3px] border border-[#857d6c] pl-1.5 whitespace-nowrap";
  return (
    <footer className="flex h-[25px] shrink-0 items-center border-t border-[#f8f6f2] bg-[#edeae4] pt-0.5 pr-0.5 pl-px font-['DejaVu_Sans',sans-serif] text-[13px] text-black">
      <button
        aria-label="Show desktop"
        className="flex size-[22px] items-center justify-center rounded-[3px] border border-[#857d6c] bg-[#f4f2ee]"
      >
        <Ico>
          <path d="M1 8l6-5 8 4-6 7z" fill="#506068" stroke="#222" />
          <path d="M4 8l4-3 4 2-4 3z" fill="#50a0d8" />
          <path d="M1 10l7 4 6-6" stroke="#b09040" strokeWidth="1.500" />
        </Ico>
      </button>
      <div className="mr-[3px] ml-[3px] h-[22px] w-1.5 bg-[repeating-linear-gradient(#b8b09c_0_1px,#f8f6f2_1px_2px)]" />
      <div className="flex min-w-0 flex-1 gap-0.5">
        {tasks.map((t, i) => (
          <button
            key={i}
            className={t.active ? `${base} bg-[#d6cfc4]` : `${base} bg-linear-to-b from-[#fcfbfa] to-[#e4dfd8]`}
          >
            {t.icon}
            <span>{t.label}</span>
          </button>
        ))}
      </div>
      <button aria-label="Trash" className="mx-[3px]">
        <Ico size={20}>
          <path d="M2 5h12l-1 10H3z" fill="#3c7cc4" stroke="#1c4c88" />
          <path d="M2 5c1-4 4-4 6-3 3-2 6 0 6 3z" fill="#dce8f4" stroke="#6484a8" strokeWidth=".8" />
          <path d="M4 7v6" stroke="#88b8e8" />
        </Ico>
      </button>
      <div className="flex gap-px">
        <button
          aria-label="Workspace 1"
          className="flex h-5 w-[25px] items-center justify-center border-t border-[#2c5c98] bg-[#94c4f4]"
        >
          <AppIcon />
        </button>
        {[2, 3, 4].map((n) => (
          <button key={n} aria-label={`Workspace ${n}`} className="h-5 w-[25px] bg-[#b0a590]" />
        ))}
      </div>
    </footer>
  );
}

export default function App() {
  return (
    <div className="flex h-screen flex-col overflow-hidden bg-[#edeae4] font-['Noto_Sans',sans-serif] text-black">
      <TopPanel />
      <TitleBar />
      <div className="flex min-h-0 flex-1 flex-col border-r border-b-2 border-l border-[#4c4a44] bg-[#efebe4] pr-[3px] pb-[3px] pl-1">
        <div className="flex min-h-0 flex-1 flex-col bg-[#d4d0c8]">
          <nav className="flex h-[22px] shrink-0 items-center gap-3 border-b border-[#77756c] pl-[5px] font-['Liberation_Sans',sans-serif] text-[13px]">
            {["File", "WaveView", "Panel", "Axes", "Tools", "Config", "Help"].map((m) => (
              <button key={m}>{m}</button>
            ))}
          </nav>
          <div className="shrink-0 border-t border-b border-t-white border-b-[#77756c]">
            <Toolbar />
          </div>
          <div className="flex min-h-0 flex-1 border-t border-white">
            <OutputView />
            <div className="ml-1 w-0.5 shrink-0 bg-[#2c2c2a]" />
            <WaveView />
          </div>
          <StatusBar />
        </div>
      </div>
      <TaskBar />
    </div>
  );
}
